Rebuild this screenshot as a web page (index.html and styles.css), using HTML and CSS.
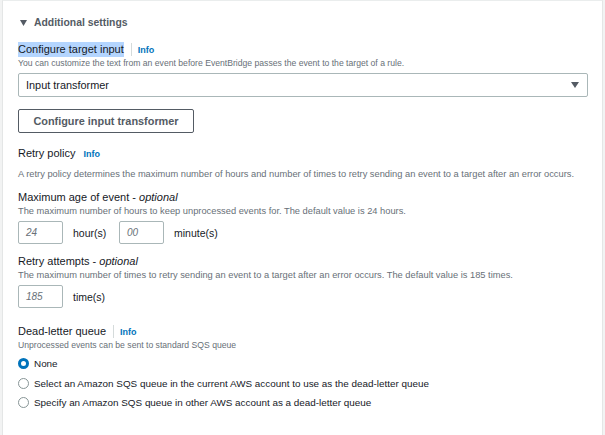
FILE: index.html
```html
<!DOCTYPE html>
<html>
<head>
<meta charset="utf-8">
<link rel="stylesheet" href="styles.css">
</head>
<body>
<div class="panel">
  <div class="expander"><svg class="caret" width="7" height="6" viewBox="0 0 7 6"><path d="M0 0H7L3.5 6Z" fill="#545b64"/></svg><span>Additional settings</span></div>

  <div class="field first">
    <div class="label-row"><span class="label sel">Configure target input</span><span class="sep"></span><a class="info">Info</a></div>
    <div class="desc small">You can customize the text from an event before EventBridge passes the event to the target of a rule.</div>
    <div class="select"><span>Input transformer</span><svg class="arrow" width="8" height="6" viewBox="0 0 8 6"><path d="M0 0H8L4 6Z" fill="#545b64"/></svg></div>
    <button class="btn">Configure input transformer</button>
  </div>

  <div class="field retry">
    <div class="label-row"><span class="label">Retry policy</span><a class="info wide">Info</a></div>
    <div class="desc gap">A retry policy determines the maximum number of hours and number of times to retry sending an event to a target after an error occurs.</div>
  </div>

  <div class="field sub">
    <div class="label">Maximum age of event - <i>optional</i></div>
    <div class="desc">The maximum number of hours to keep unprocessed events for. The default value is 24 hours.</div>
    <div class="inputs">
      <div class="input">24</div><span class="unit">hour(s)</span>
      <div class="input">00</div><span class="unit">minute(s)</span>
    </div>
  </div>

  <div class="field sub">
    <div class="label">Retry attempts - <i>optional</i></div>
    <div class="desc">The maximum number of times to retry sending an event to a target after an error occurs. The default value is 185 times.</div>
    <div class="inputs">
      <div class="input">185</div><span class="unit">time(s)</span>
    </div>
  </div>

  <div class="field dlq">
    <div class="label-row"><span class="label">Dead-letter queue</span><span class="sep"></span><a class="info">Info</a></div>
    <div class="desc small">Unprocessed events can be sent to standard SQS queue</div>
    <div class="radios">
      <label class="radio"><span class="dot on"></span>None</label>
      <label class="radio"><span class="dot"></span>Select an Amazon SQS queue in the current AWS account to use as the dead-letter queue</label>
      <label class="radio"><span class="dot"></span>Specify an Amazon SQS queue in other AWS account as a dead-letter queue</label>
    </div>
  </div>
</div>
</body>
</html>
```

FILE: styles.css
```css
html, body {
  margin: 0;
  padding: 0;
  background: #f2f3f3;
}
body {
  font-family: "Liberation Sans", Arial, sans-serif;
  color: #16191f;
  width: 605px;
  height: 435px;
  overflow: hidden;
}
.panel {
  box-sizing: border-box;
  margin-left: 2px;
  width: 601px;
  height: 435px;
  background: #fff;
  border-left: 1px solid #e4e6e6;
  border-right: 1px solid #e4e6e6;
  border-top: 1px solid #eaeded;
  padding: 14px 0 0 15px;
}
.expander {
  display: flex;
  align-items: center;
  font-size: 10.4px;
  font-weight: bold;
  color: #545b64;
  height: 15px;
}
.caret {
  margin: 0 7px 0 2px;
}
.field.first { margin-top: 12px; }
.label-row {
  display: flex;
  align-items: center;
  height: 15px;
}
.label {
  font-size: 11px;
  color: #16191f;
  line-height: 15px;
}
.label.sel { background: #b4d5fe; }
.sep {
  width: 1px;
  height: 13px;
  background: #d5dbdb;
  margin: 0 6px 0 7px;
}
.info {
  font-size: 9px;
  font-weight: bold;
  color: #0073bb;
}
.info.wide { margin-left: 8px; }
.desc {
  font-size: 9.3px;
  color: #687078;
  line-height: 12px;
}
.desc.small { font-size: 8.65px; }
.select {
  box-sizing: border-box;
  margin-top: 4px;
  width: 570px;
  height: 24px;
  border: 1px solid #aab7b8;
  border-radius: 2px;
  display: flex;
  align-items: center;
  justify-content: space-between;
  padding: 0 8px 0 7px;
  font-size: 10.9px;
}
.btn {
  display: block;
  box-sizing: border-box;
  margin-top: 12px;
  width: 176px;
  height: 24px;
  background: #fff;
  border: 1px solid #545b64;
  border-radius: 2px;
  font-family: inherit;
  font-size: 10.9px;
  font-weight: bold;
  color: #545b64;
  padding: 0;
}
.field.retry { margin-top: 13px; }
.desc.gap { margin-top: 7px; }
.field.sub { margin-top: 10px; }
.inputs {
  display: flex;
  align-items: center;
  margin-top: 4px;
}
.input {
  box-sizing: border-box;
  width: 45px;
  height: 23px;
  border: 1px solid #aab7b8;
  border-radius: 2px;
  font-size: 10px;
  font-style: italic;
  color: #687078;
  display: flex;
  align-items: center;
  padding-left: 7px;
}
.unit {
  font-size: 10.5px;
  margin: 0 10px 0 10px;
  width: 36px;
}
.inputs .unit:last-child { width: auto; }
.field.dlq { margin-top: 16px; }
.radios {
  display: flex;
  flex-direction: column;
  gap: 6.5px;
  margin-top: 6px;
}
.radio {
  display: flex;
  align-items: center;
  font-size: 9.9px;
  height: 13px;
}
.dot {
  box-sizing: border-box;
  width: 11px;
  height: 11px;
  border-radius: 50%;
  border: 1px solid #879596;
  margin-right: 5px;
  background: #fff;
}
.dot.on {
  border: 3.5px solid #0073bb;
}
```
